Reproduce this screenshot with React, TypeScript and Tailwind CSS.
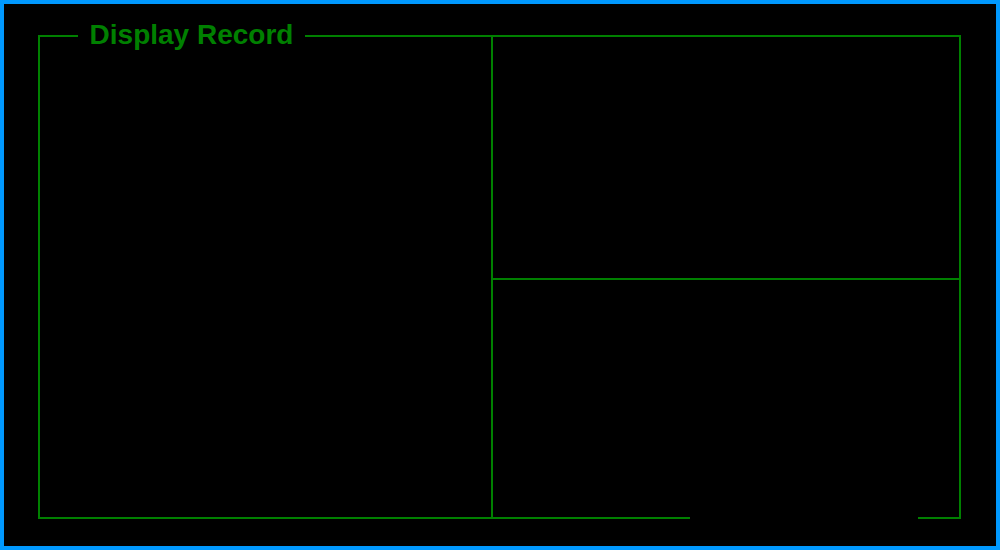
export default function App() {
  return (
    <div className="h-[550px] w-[1000px] border-4 border-[#0099ff] bg-black pl-[34px] pt-[31px]">
      <div className="relative grid h-[484px] w-[923px] grid-cols-[451px_1fr] border-2 border-[#008000]">
        {/* legend */}
        <div className="absolute -top-[16px] left-[38px] w-[227px] bg-black text-center font-['Liberation_Sans',Arial,sans-serif] text-[28px] font-bold leading-[28px] text-[#008000]">
          Display Record
        </div>
        {/* gap in bottom border */}
        <div className="absolute -bottom-[2px] left-[650px] h-[2px] w-[228px] bg-black" />

        <div />
        <div className="grid grid-rows-[241px_1fr] border-l-2 border-[#008000]">
          <div />
          <div className="border-t-2 border-[#008000]" />
        </div>
      </div>
    </div>
  );
}
